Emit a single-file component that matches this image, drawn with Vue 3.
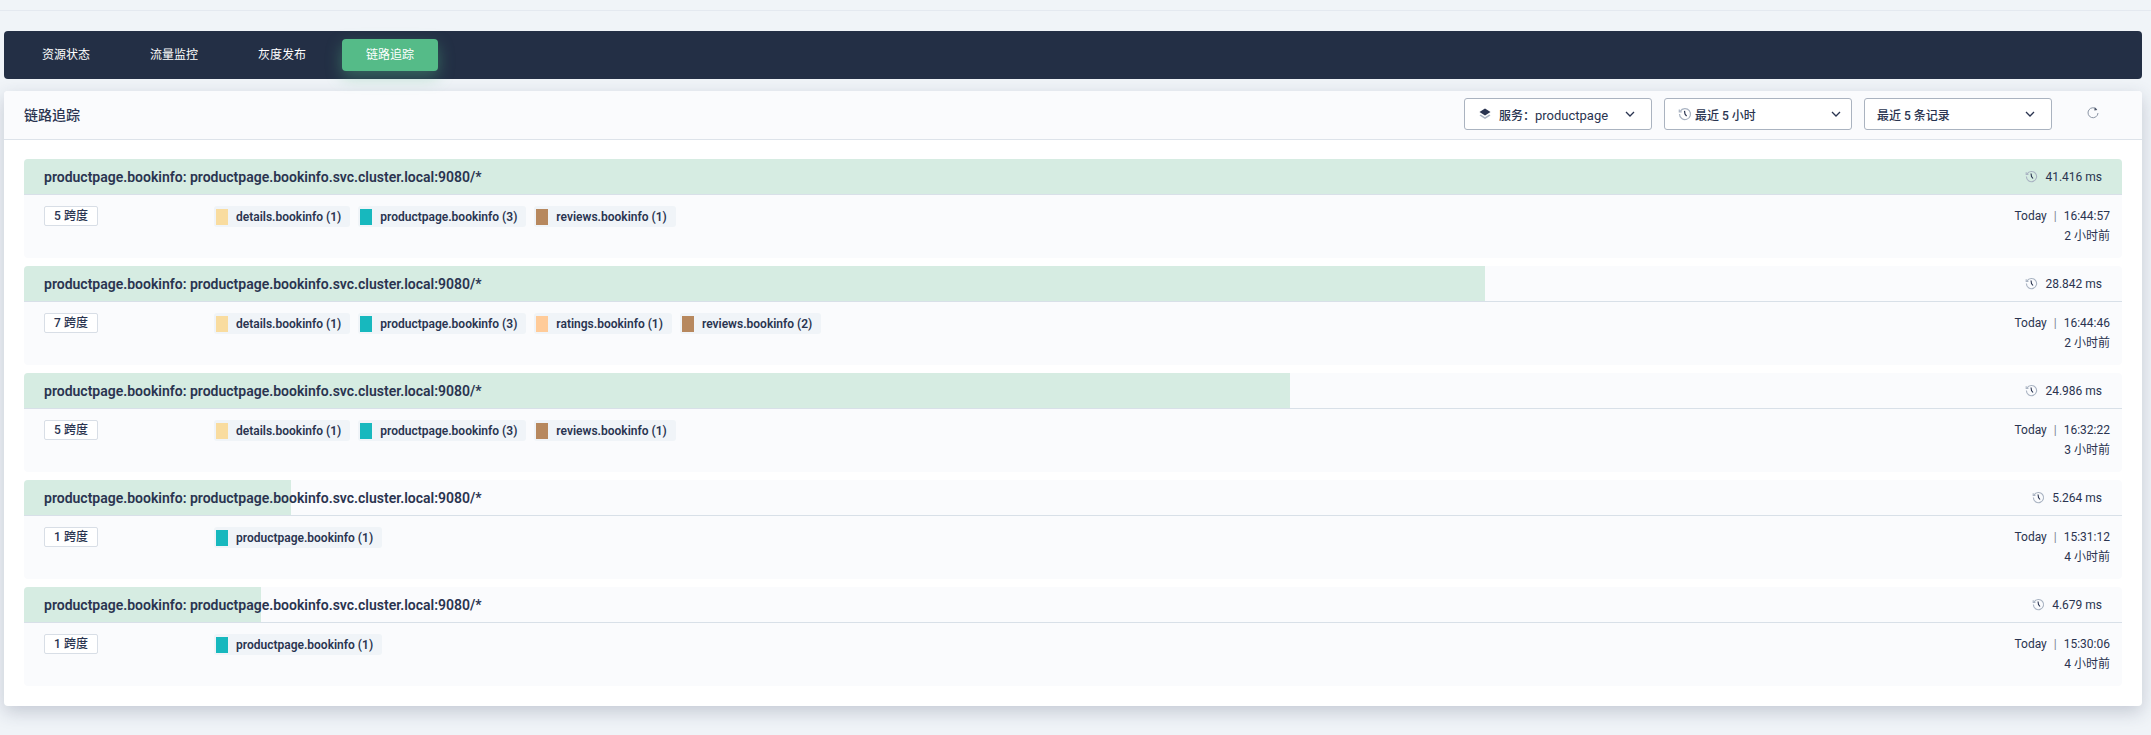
<script setup>
const navItems = ['资源状态', '流量监控', '灰度发布', '链路追踪']
const colors = { details: '#f9dc9f', productpage: '#17b8be', ratings: '#ffcb99', reviews: '#b7885e' }
const maxDuration = 41.416
const traces = [
  { duration: 41.416, spans: 5, time: '16:44:57', ago: '2 小时前', tags: [['details', 1], ['productpage', 3], ['reviews', 1]] },
  { duration: 28.842, spans: 7, time: '16:44:46', ago: '2 小时前', tags: [['details', 1], ['productpage', 3], ['ratings', 1], ['reviews', 2]] },
  { duration: 24.986, spans: 5, time: '16:32:22', ago: '3 小时前', tags: [['details', 1], ['productpage', 3], ['reviews', 1]] },
  { duration: 5.264, spans: 1, time: '15:31:12', ago: '4 小时前', tags: [['productpage', 1]] },
  { duration: 4.679, spans: 1, time: '15:30:06', ago: '4 小时前', tags: [['productpage', 1]] }
]
const barWidth = (d) => (d / maxDuration) * 100 + '%'
</script>

<template>
  <div class="page">
    <div class="topbar"></div>
    <main class="content">
      <nav class="nav">
        <a v-for="(item, i) in navItems" :key="item" class="nav-item" :class="{ active: i === 3 }">{{ item }}</a>
      </nav>
      <section class="card">
        <header class="card-head">
          <h2 class="card-title">链路追踪</h2>
          <div class="filters">
            <div class="select">
              <svg class="sel-icon" viewBox="0 0 14 14">
                <path d="M7 1.500 12.500 5 7 8.500 1.500 5Z" fill="#2a3450" />
                <path d="M2.800 7.600 7 10.300l4.200-2.700 1.300.9L7 12 1.500 8.500Z" fill="#a9b3c2" />
              </svg>
              <span class="sel-text">服务：<span class="sel-value">productpage</span></span>
              <svg class="chev" viewBox="0 0 12 12"><path d="M2 4l4 4 4-4" /></svg>
            </div>
            <div class="select select-time">
              <svg class="sel-icon clock-sm" viewBox="0 0 14 14">
                <path d="M2.300 4.200A5.500 5.500 0 1 1 1.500 7" class="clock-ring" />
                <path d="M1.300 2.400v2.400h2.400" class="clock-ring" />
                <path d="M6.500 3.800 7 7l1.600 2.200" class="clock-hand" />
              </svg>
              <span class="sel-text">最近 5 小时</span>
              <svg class="chev" viewBox="0 0 12 12"><path d="M2 4l4 4 4-4" /></svg>
            </div>
            <div class="select select-count">
              <span class="sel-text">最近 5 条记录</span>
              <svg class="chev" viewBox="0 0 12 12"><path d="M2 4l4 4 4-4" /></svg>
            </div>
            <button class="refresh" aria-label="刷新">
              <svg viewBox="0 0 14 14">
                <path d="M10.900 3.600A5 5 0 1 0 12 7" class="refresh-arc" />
                <path d="M8.800 1.200 11.300 4 8.300 4.600Z" fill="#4b5568" />
              </svg>
            </button>
          </div>
        </header>
        <div class="traces">
          <article v-for="t in traces" :key="t.time" class="trace">
            <div class="trace-head">
              <div class="bar" :style="{ width: barWidth(t.duration) }"></div>
              <span class="trace-title">productpage.bookinfo: productpage.bookinfo.svc.cluster.local:9080/*</span>
              <span class="duration">
                <svg class="dur-icon" viewBox="0 0 14 14">
                  <path d="M2.300 4.200A5.500 5.500 0 1 1 1.500 7" class="clock-ring" />
                  <path d="M1.300 2.400v2.400h2.400" class="clock-ring" />
                  <path d="M6.500 3.800 7 7l1.600 2.200" class="clock-hand" />
                </svg>
                {{ t.duration.toFixed(3) }} ms
              </span>
            </div>
            <div class="trace-body">
              <span class="badge">{{ t.spans }} 跨度</span>
              <div class="tags">
                <span v-for="tag in t.tags" :key="tag[0]" class="tag">
                  <i class="swatch" :style="{ background: colors[tag[0]] }"></i>
                  {{ tag[0] }}.bookinfo ({{ tag[1] }})
                </span>
              </div>
              <div class="when">
                <div>Today<span class="sep">|</span>{{ t.time }}</div>
                <div>{{ t.ago }}</div>
              </div>
            </div>
          </article>
        </div>
      </section>
    </main>
  </div>
</template>

<style>
html, body { margin: 0; background: #f0f4f8; overflow: hidden; }
</style>

<style scoped>
.page {
  height: 735px;
  background: #f0f4f8;
  color: #2a3450;
  font-family: Roboto, "Noto Sans CJK SC", sans-serif;
  font-size: 12px;
  overflow: hidden;
}
.topbar { height: 10px; border-bottom: 1px solid #e4e9f0; }
.content { padding: 20px 9px 0 4px; }
.nav {
  display: flex;
  gap: 12px;
  height: 32px;
  padding: 8px 14px;
  background: #232f45;
  border-radius: 4px;
}
.nav-item {
  width: 96px;
  line-height: 32px;
  text-align: center;
  color: #fff;
  border-radius: 4px;
}
.nav-item.active {
  background: #55bb88;
  box-shadow: 0 6px 16px rgba(85, 187, 136, 0.4);
}
.card {
  margin-top: 12px;
  background: #fff;
  border-radius: 4px;
  box-shadow: 0 6px 18px rgba(42, 52, 80, 0.22);
}
.card-head {
  display: flex;
  justify-content: space-between;
  align-items: center;
  height: 48px;
  padding: 0 20px;
  background: #fafbfd;
  border-bottom: 1px solid #dde3ea;
  border-radius: 4px 4px 0 0;
}
.card-title { margin: 0 0 3px; font-size: 14px; font-weight: 500; }
.filters { display: flex; align-items: center; gap: 12px; margin-bottom: 2px; }
.select {
  box-sizing: border-box;
  display: flex;
  align-items: center;
  width: 188px;
  height: 32px;
  padding: 0 15px 0 13px;
  background: #fff;
  border: 1px solid #aab3c0;
  border-radius: 3px;
  font-weight: 500;
}
.select-time { padding-right: 9px; }
.select-count { padding-left: 12px; }
.sel-icon { width: 14px; height: 14px; margin-right: 7px; flex: none; }
.clock-sm { margin-right: 3px; }
.sel-text { flex: 1; white-space: nowrap; }
.sel-value { font-size: 13px; font-weight: 400; }
.chev { width: 12px; height: 12px; fill: none; stroke: #2a3450; stroke-width: 1.300; }
.refresh {
  width: 58px;
  height: 32px;
  padding: 0;
  display: flex;
  align-items: center;
  justify-content: center;
  background: none;
  border: 0;
}
.refresh svg { width: 14px; height: 14px; margin-top: -3px; }
.refresh-arc { fill: none; stroke: #8b95a5; stroke-width: 1; }
.clock-ring { fill: none; stroke: #a9b3c2; stroke-width: 1.200; }
.clock-hand { fill: none; stroke: #2a3450; stroke-width: 1.200; }
.traces { display: flex; flex-direction: column; gap: 8px; padding: 19px 20px 20px; }
.trace { height: 99px; background: #fafbfd; border-radius: 4px; overflow: hidden; }
.trace-head {
  position: relative;
  box-sizing: border-box;
  display: flex;
  justify-content: space-between;
  align-items: center;
  height: 36px;
  padding: 0 20px;
  border-bottom: 1px solid #d8e0e8;
}
.bar { position: absolute; left: 0; top: 0; bottom: 0; background: #d6ece2; }
.trace-title { position: relative; font-size: 14px; font-weight: 600; }
.duration { position: relative; display: flex; align-items: center; }
.dur-icon { width: 13px; height: 13px; margin-right: 7px; }
.trace-body { position: relative; display: flex; align-items: flex-start; padding: 11px 12px 0 20px; }
.badge {
  box-sizing: border-box;
  width: 54px;
  height: 20px;
  margin-right: 116px;
  line-height: 18px;
  text-align: center;
  background: #fff;
  border: 1px solid #d8dee6;
  border-radius: 2px;
  font-weight: 500;
  flex: none;
}
.tags { display: flex; gap: 8px; flex: 1; }
.tag {
  display: flex;
  align-items: center;
  height: 21px;
  padding: 0 9px 0 2px;
  background: #f0f4f8;
  border-radius: 3px;
  font-weight: 600;
  white-space: nowrap;
}
.swatch { width: 12px; height: 16px; margin-right: 8px; }
.when { text-align: right; line-height: 20px; }
.sep { margin: 0 7px; color: #7c8596; }
</style>
